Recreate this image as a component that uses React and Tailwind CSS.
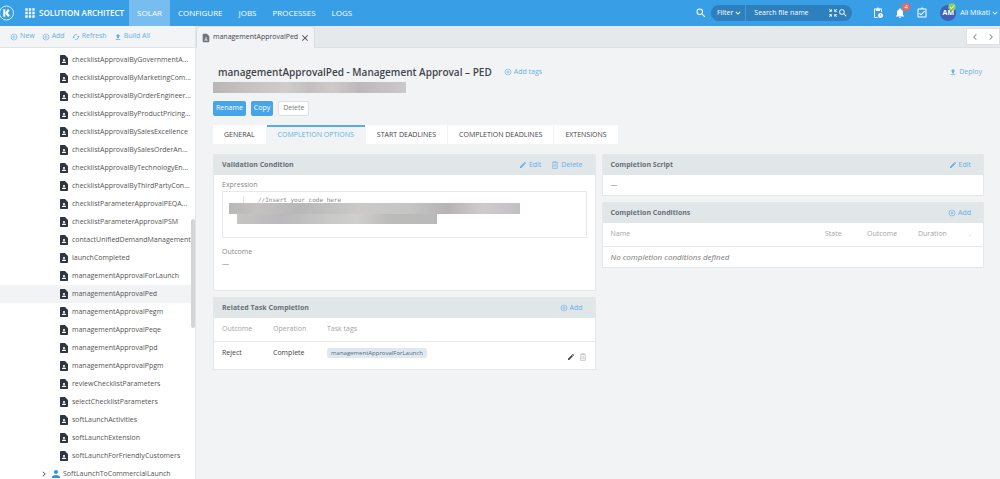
import React from "react";
import {
  MdAddCircleOutline,
  MdApps,
  MdClose,
  MdContactPage,
  MdEdit,
  MdKeyboardArrowDown,
  MdKeyboardArrowLeft,
  MdKeyboardArrowRight,
  MdNotifications,
  MdOutlineAssignmentTurnedIn,
  MdOutlinePendingActions,
  MdPerson,
  MdSearch,
  MdSync,
  MdUpload,
  MdZoomInMap,
} from "react-icons/md";

const navItems = ["CONFIGURE", "JOBS", "PROCESSES", "LOGS"];

const treeItems = [
  "checklistApprovalByGovernmentA...",
  "checklistApprovalByMarketingCom...",
  "checklistApprovalByOrderEngineer...",
  "checklistApprovalByProductPricing...",
  "checklistApprovalBySalesExcellence",
  "checklistApprovalBySalesOrderAn...",
  "checklistApprovalByTechnologyEn...",
  "checklistApprovalByThirdPartyCon...",
  "checklistParameterApprovalPEQA...",
  "checklistParameterApprovalPSM",
  "contactUnifiedDemandManagement",
  "launchCompleted",
  "managementApprovalForLaunch",
  "managementApprovalPed",
  "managementApprovalPegm",
  "managementApprovalPeqe",
  "managementApprovalPpd",
  "managementApprovalPpgm",
  "reviewChecklistParameters",
  "selectChecklistParameters",
  "softLaunchActivities",
  "softLaunchExtension",
  "softLaunchForFriendlyCustomers",
];

const tabs = [
  "GENERAL",
  "COMPLETION OPTIONS",
  "START DEADLINES",
  "COMPLETION DEADLINES",
  "EXTENSIONS",
];

function TrashIcon({ className }) {
  return (
    <svg viewBox="0 0 12 14" className={className} fill="none" stroke="currentColor">
      <path d="M1 2.5h10M4 2V1h4v1M2 3v10h8V3M4.5 5v6M7.5 5v6" />
    </svg>
  );
}

function Logo() {
  return (
    <svg viewBox="0 0 32 32" className="-ml-px size-4 shrink-0" fill="none" stroke="#fff">
      <circle cx="15" cy="16" r="14" strokeWidth="1.6" />
      <path d="M10.5 8.5v15" strokeWidth="4" />
      <path d="M19.5 9.5l-5 6.5 5.500 6.500" strokeWidth="4.4" strokeLinejoin="round" />
    </svg>
  );
}

function LinkButton({ icon, children }) {
  return (
    <button className="flex items-center gap-0.5 text-[#62b0ea]">
      {icon}
      {children}
    </button>
  );
}

function Panel({ title, actions, children }) {
  return (
    <section className="border border-[#e4e8eb] bg-white">
      <div className="flex h-5 items-center justify-between bg-[#e1e6e9] pl-2 pr-3">
        <h2 className="font-bold text-[#6a7076]">{title}</h2>
        <div className="flex gap-2.5">{actions}</div>
      </div>
      {children}
    </section>
  );
}

function Header() {
  return (
    <header className="flex h-[26px] shrink-0 items-center bg-[#389fe7] text-[8px] text-white">
      <Logo />
      <a href="#" className="ml-2 mr-[5px] flex items-center gap-0.5 font-semibold">
        <MdApps className="size-3.5" />
        SOLUTION ARCHITECT
      </a>
      <nav className="flex h-full items-center">
        <a href="#" className="flex h-full items-center bg-[#78bdef] px-2">
          SOLAR
        </a>
        {navItems.map((item) => (
          <a href="#" key={item} className="px-2">
            {item}
          </a>
        ))}
      </nav>
      <div className="ml-auto flex items-center text-[7px]">
        <MdSearch className="mr-1 size-3" />
        <div className="flex h-4 items-center rounded-full bg-[#2d80bd]">
          <button className="flex h-full items-center border-r border-[#4a9bd5] pl-1.5 pr-0.5">
            Filter
            <MdKeyboardArrowDown className="size-2.5" />
          </button>
          <input
            aria-label="Search file name"
            placeholder="Search file name"
            className="w-[82px] bg-transparent pl-2 outline-none placeholder:text-white"
          />
          <MdZoomInMap className="size-2.5" />
          <MdSearch className="mr-1 size-2.5" />
        </div>
        <MdOutlinePendingActions className="ml-5 size-3" />
        <div className="relative ml-2.5">
          <MdNotifications className="size-3" />
          <span className="absolute -right-1 -top-1 flex size-2 items-center justify-center rounded-full bg-[#f2645c] text-[6px]">
            4
          </span>
        </div>
        <MdOutlineAssignmentTurnedIn className="ml-2.5 size-3" />
        <div className="relative ml-3 flex size-4 items-center justify-center rounded-full bg-[#3f62b5] font-bold">
          AM
          <svg viewBox="0 0 12 12" className="absolute -top-0.5 left-2 size-2">
            <circle cx="6" cy="6" r="5.5" fill="#8bd05a" />
            <path d="M3 6l2 2.500 4-4.500" fill="none" stroke="#fff" strokeWidth="1.5" />
          </svg>
        </div>
        <button className="ml-1 flex items-center">
          Ali Mikati
          <MdKeyboardArrowDown className="size-2.5" />
        </button>
      </div>
    </header>
  );
}

function Sidebar() {
  return (
    <aside className="relative flex w-[196px] shrink-0 flex-col overflow-hidden border-r border-[#e3e6e9] bg-white">
      <div className="flex h-[22px] shrink-0 items-center gap-[7px] border-b border-[#dfe3e6] bg-[#f3f4f5] pl-2.5">
        <LinkButton icon={<MdAddCircleOutline className="size-2" />}>New</LinkButton>
        <LinkButton icon={<MdAddCircleOutline className="size-2" />}>Add</LinkButton>
        <LinkButton icon={<MdSync className="size-2 rotate-90" />}>Refresh</LinkButton>
        <LinkButton icon={<MdUpload className="size-2" />}>Build All</LinkButton>
      </div>
      <ul className="pt-[3px] text-[#555]">
        {treeItems.map((item) => (
          <li
            key={item}
            className={
              item === "managementApprovalPed"
                ? "flex h-[18px] items-center gap-0.5 bg-[#f2f3f5] pl-[58px]"
                : "flex h-[18px] items-center gap-0.5 pl-[58px]"
            }
          >
            <MdContactPage className="size-3 shrink-0 text-[#30363f]" />
            <span className="whitespace-nowrap">{item}</span>
          </li>
        ))}
        <li className="flex h-[18px] items-center pl-[39px]">
          <MdKeyboardArrowRight className="size-2.5" />
          <MdPerson className="mx-px size-3 text-[#2c93e2]" />
          SoftLaunchToCommercialLaunch
        </li>
      </ul>
      {/* scrollbar thumb */}
      <div className="absolute right-0 top-[193px] h-[109px] w-1 rounded-full bg-[#d3d6d9]" />
    </aside>
  );
}

function FileTabs() {
  return (
    <div className="flex h-[22px] shrink-0 items-center justify-between border-b border-[#dadfe3] bg-[#e5e9ec]">
      <div className="mt-px flex h-[22px] items-center gap-0.5 rounded-t border border-b-0 border-[#d8dde1] bg-[#f2f3f6] px-1 text-[#444]">
        <MdContactPage className="size-2.5 text-[#6f767d]" />
        managementApprovalPed
        <button aria-label="Close tab">
          <MdClose className="size-2.5" />
        </button>
      </div>
      <div className="flex h-[17px] items-center gap-1 border border-[#dde1e4] bg-white px-0.5 text-[#8b969f]">
        <button aria-label="Previous tab">
          <MdKeyboardArrowLeft className="size-3" />
        </button>
        <button aria-label="Next tab">
          <MdKeyboardArrowRight className="size-3" />
        </button>
      </div>
    </div>
  );
}

function ValidationCondition() {
  return (
    <Panel
      title="Validation Condition"
      actions={
        <>
          <LinkButton icon={<MdEdit className="size-2" />}>Edit</LinkButton>
          <LinkButton icon={<TrashIcon className="size-2" />}>Delete</LinkButton>
        </>
      }
    >
      <div className="px-2 pb-5 pt-1 text-[#888]">
        <div className="leading-3">Expression</div>
        <div className="h-[47px] border border-[#e6e8ea] px-1.5 pt-1">
          <pre className="ml-3.5 border-l border-[#e4e4e4] pl-3.5 font-['DejaVu_Sans_Mono',monospace] text-[6px] leading-[7px]">
            {"//Insert your code here"}
          </pre>
          <div className="h-[11px] w-[83%] bg-[linear-gradient(to_right,#b9b8b7,#c4c2c1_10%,#b8b7b7_24%,#cbcac9_45%,#c6c5c5_62%,#b5b3b4_75%,#cfcbcd_87%,#c2bec3)]" />
          <div className="ml-2 h-[10px] w-[57%] bg-[linear-gradient(to_right,#c6c5c4,#bab8ba_22%,#c8c8c7_45%,#cfcfce_60%,#bcbcbb_75%,#b9b9b9)]" />
        </div>
        <div className="mt-2 leading-3">Outcome</div>
        <div className="leading-3">—</div>
      </div>
    </Panel>
  );
}

function RelatedTaskCompletion() {
  return (
    <Panel
      title="Related Task Completion"
      actions={<LinkButton icon={<MdAddCircleOutline className="size-2" />}>Add</LinkButton>}
    >
      <table className="w-full text-left">
        <thead>
          <tr className="h-[23px] border-b border-[#e6e9eb] text-[#a2a5a8]">
            <th className="w-[51px] pl-2 font-normal">Outcome</th>
            <th className="w-[54px] pl-2 font-normal">Operation</th>
            <th className="pl-2 font-normal">Task tags</th>
            <th className="pr-2" />
          </tr>
        </thead>
        <tbody>
          <tr className="h-7 text-[#444]">
            <td className="pb-1 pl-2">Reject</td>
            <td className="pb-1 pl-2">Complete</td>
            <td className="pb-1 pl-2">
              <span className="rounded-xs bg-[#e0e8ef] px-1 py-px text-[6px] text-[#526878]">
                managementApprovalForLaunch
              </span>
            </td>
            <td className="pr-2">
              <div className="flex justify-end gap-1 pt-1">
                <button aria-label="Edit">
                  <MdEdit className="size-2" />
                </button>
                <button aria-label="Delete">
                  <TrashIcon className="size-2 text-[#aaa]" />
                </button>
              </div>
            </td>
          </tr>
        </tbody>
      </table>
    </Panel>
  );
}

function CompletionConditions() {
  return (
    <Panel
      title="Completion Conditions"
      actions={<LinkButton icon={<MdAddCircleOutline className="size-2" />}>Add</LinkButton>}
    >
      <table className="w-full text-left">
        <thead>
          <tr className="h-[23px] border-b border-[#e6e9eb] text-[#a2a5a8]">
            <th className="pl-2 font-normal">Name</th>
            <th className="w-[42px] font-normal">State</th>
            <th className="w-[51px] font-normal">Outcome</th>
            <th className="w-[51px] font-normal">Duration</th>
            <th className="w-[14px] font-normal">.</th>
          </tr>
        </thead>
        <tbody>
          <tr className="h-[21px] text-[8px] italic text-[#777]">
            <td colSpan={5} className="pl-2">
              No completion conditions defined
            </td>
          </tr>
        </tbody>
      </table>
    </Panel>
  );
}

export default function App() {
  return (
    <div className="flex h-screen flex-col overflow-hidden bg-[#f2f3f5] font-['Open_Sans',sans-serif] text-[7px]">
      <Header />
      <div className="flex min-h-0 flex-1">
        <Sidebar />
        <div className="flex min-w-0 flex-1 flex-col">
          <FileTabs />
          <main className="px-4 pt-4 pl-[17px]">
            <div className="flex items-center justify-between pr-0.5">
              <div className="flex items-center gap-3 pl-[5px]">
                <h1 className="text-[10px] font-semibold leading-4 text-[#3f454b]">
                  managementApprovalPed - Management Approval – PED
                </h1>
                <LinkButton icon={<MdAddCircleOutline className="size-2" />}>Add tags</LinkButton>
              </div>
              <LinkButton icon={<MdUpload className="size-2" />}>Deploy</LinkButton>
            </div>
            <div className="mt-0.5 h-[11px] w-1/4 bg-[linear-gradient(to_right,#b9b7b6,#c6c4c3_20%,#cfcdcc_38%,#c2c0c0_50%,#cdcaca_62%,#bbb9ba_76%,#cbc8ca)]" />

            {/* Actions */}
            <div className="mt-2 flex gap-[5px]">
              <button className="h-[15px] rounded-xs bg-[#45a5e8] px-[3px] text-white">Rename</button>
              <button className="h-[15px] rounded-xs bg-[#45a5e8] px-[3px] text-white">Copy</button>
              <button className="h-[15px] rounded-xs border border-[#dcdfe2] bg-white px-1 text-[#777]">
                Delete
              </button>
            </div>

            <div className="mt-[9px] flex gap-px">
              {tabs.map((tab) => (
                <button
                  key={tab}
                  className={
                    tab === "COMPLETION OPTIONS"
                      ? "h-[19px] border-t-2 border-[#55aeea] px-[11px] text-[#62b0ea]"
                      : "h-[19px] border-t-2 border-white bg-white px-[11px] text-[#444]"
                  }
                >
                  {tab}
                </button>
              ))}
            </div>

            <div className="mt-2.5 grid grid-cols-2 items-start gap-1.5">
              <div className="flex flex-col gap-1.5">
                <ValidationCondition />
                <RelatedTaskCompletion />
              </div>
              <div className="flex flex-col gap-1.5">
                <Panel
                  title="Completion Script"
                  actions={<LinkButton icon={<MdEdit className="size-2" />}>Edit</LinkButton>}
                >
                  <div className="px-2 py-1 leading-3 text-[#888]">—</div>
                </Panel>
                <CompletionConditions />
              </div>
            </div>
          </main>
        </div>
      </div>
    </div>
  );
}
